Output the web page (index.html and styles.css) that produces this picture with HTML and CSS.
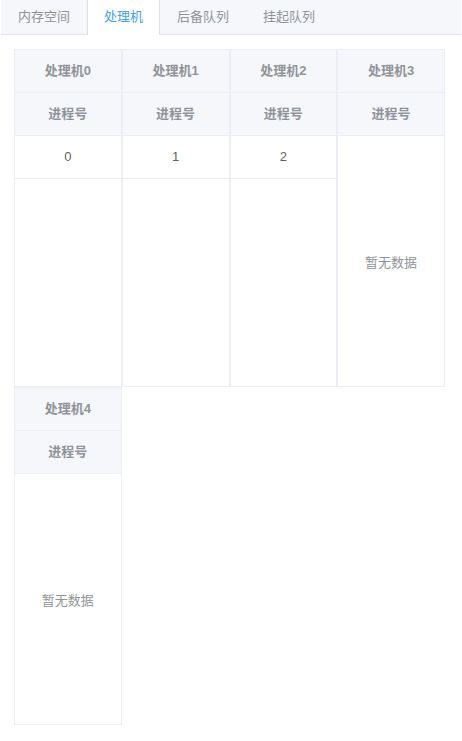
FILE: index.html
```html
<!DOCTYPE html>
<html lang="zh-CN">
<head>
    <meta charset="UTF-8">
    <meta name="viewport" content="width=device-width, initial-scale=1.0">
    <title>处理机</title>
    <link rel="stylesheet" href="styles.css">
</head>
<body>

    <div class="tabs">
        <div class="tab-bar">
            <div class="tab">内存空间</div>
            <div class="tab active">处理机</div>
            <div class="tab">后备队列</div>
            <div class="tab">挂起队列</div>
        </div>

        <div class="tab-content">
            <div class="proc">
                <div class="head">处理机0</div>
                <div class="head">进程号</div>
                <div class="body">
                    <div class="cell">0</div>
                </div>
            </div>
            <div class="proc">
                <div class="head">处理机1</div>
                <div class="head">进程号</div>
                <div class="body">
                    <div class="cell">1</div>
                </div>
            </div>
            <div class="proc">
                <div class="head">处理机2</div>
                <div class="head">进程号</div>
                <div class="body">
                    <div class="cell">2</div>
                </div>
            </div>
            <div class="proc">
                <div class="head">处理机3</div>
                <div class="head">进程号</div>
                <div class="body empty">暂无数据</div>
            </div>
            <div class="proc">
                <div class="head">处理机4</div>
                <div class="head">进程号</div>
                <div class="body empty">暂无数据</div>
            </div>
        </div>
    </div>

</body>
</html>
```

FILE: styles.css
```css
body {
    margin: 0;
    font-family: "Liberation Sans", "Noto Sans CJK SC", sans-serif;
    font-size: 13px;
    color: #606266;
    background: #fff;
}
.tabs {
    min-height: 741px;
    padding: 0 1px;
    box-sizing: border-box;
}
.tab-bar {
    display: flex;
    height: 34px;
    background: #f5f7fa;
    border-bottom: 1px solid #e4e7ed;
}
.tab {
    padding: 0 16px;
    line-height: 34px;
    color: #909399;
    border-left: 1px solid transparent;
    border-right: 1px solid transparent;
}
.tab.active {
    color: #409eff;
    background: #fff;
    border-left-color: #dcdfe6;
    border-right-color: #dcdfe6;
    height: 35px;
}
.tab-content {
    display: flex;
    flex-wrap: wrap;
    padding: 14px 16px 15px 13px;
}
.proc {
    width: 25%;
    height: 338px;
    box-sizing: border-box;
    border: 1px solid #ebeef5;
    display: flex;
    flex-direction: column;
    text-align: center;
}
.head {
    height: 42px;
    line-height: 42px;
    background: #f5f7fa;
    border-bottom: 1px solid #ebeef5;
    color: #909399;
    font-weight: bold;
    flex-shrink: 0;
}
.body {
    flex: 1;
}
.cell {
    height: 42px;
    line-height: 42px;
    border-bottom: 1px solid #ebeef5;
}
.empty {
    display: flex;
    align-items: center;
    justify-content: center;
    color: #909399;
}
```
